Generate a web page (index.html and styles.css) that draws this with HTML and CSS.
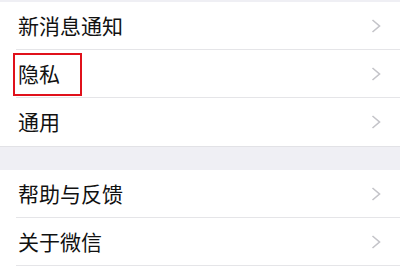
FILE: index.html
```html
<!DOCTYPE html>
<html lang="zh-CN">
<head>
<meta charset="utf-8">
<link rel="stylesheet" href="styles.css">
</head>
<body>
<div class="gap-top"></div>
<div class="group">
  <div class="row"><span class="label">新消息通知</span><svg class="chev" viewBox="0 0 10 14" width="10" height="14"><polyline points="1.5,1 8.5,7 1.5,13" fill="none" stroke="#c4c4c9" stroke-width="1.6"/></svg></div>
  <div class="row"><span class="label">隐私</span><div class="highlight"></div><svg class="chev" viewBox="0 0 10 14" width="10" height="14"><polyline points="1.5,1 8.5,7 1.5,13" fill="none" stroke="#c4c4c9" stroke-width="1.6"/></svg></div>
  <div class="row last"><span class="label">通用</span><svg class="chev" viewBox="0 0 10 14" width="10" height="14"><polyline points="1.5,1 8.5,7 1.5,13" fill="none" stroke="#c4c4c9" stroke-width="1.6"/></svg></div>
</div>
<div class="gap"></div>
<div class="group">
  <div class="row"><span class="label">帮助与反馈</span><svg class="chev" viewBox="0 0 10 14" width="10" height="14"><polyline points="1.5,1 8.5,7 1.5,13" fill="none" stroke="#c4c4c9" stroke-width="1.6"/></svg></div>
  <div class="row"><span class="label">关于微信</span><svg class="chev" viewBox="0 0 10 14" width="10" height="14"><polyline points="1.5,1 8.5,7 1.5,13" fill="none" stroke="#c4c4c9" stroke-width="1.6"/></svg></div>
</div>
</body>
</html>
```
FILE: styles.css
```css
html, body {
  margin: 0;
  padding: 0;
  background: #ffffff;
  overflow: hidden;
}
body {
  font-family: "Noto Sans CJK SC", "Noto Sans", sans-serif;
  color: #111111;
}
.gap-top {
  height: 2px;
  background: #efeff4;
}
.gap {
  height: 24px;
  background: #efeff4;
  border-top: 1px solid #e2e2e6;
  box-sizing: border-box;
}
.group {
  background: #ffffff;
}
.row {
  position: relative;
  height: 48px;
  box-sizing: border-box;
  display: flex;
  align-items: center;
  justify-content: space-between;
  padding: 0 19px 1px 18px;
}
.row::after {
  content: "";
  position: absolute;
  left: 16px;
  right: 0;
  bottom: 0;
  height: 1px;
  background: #e5e5e8;
}
.row.last::after {
  display: none;
}
.label {
  font-size: 21px;
  line-height: 1;
  letter-spacing: 0;
}
.chev {
  display: block;
}
.highlight {
  position: absolute;
  left: 13px;
  top: 3px;
  width: 69px;
  height: 43px;
  border: 2px solid #e0111b;
  box-sizing: border-box;
}
```
